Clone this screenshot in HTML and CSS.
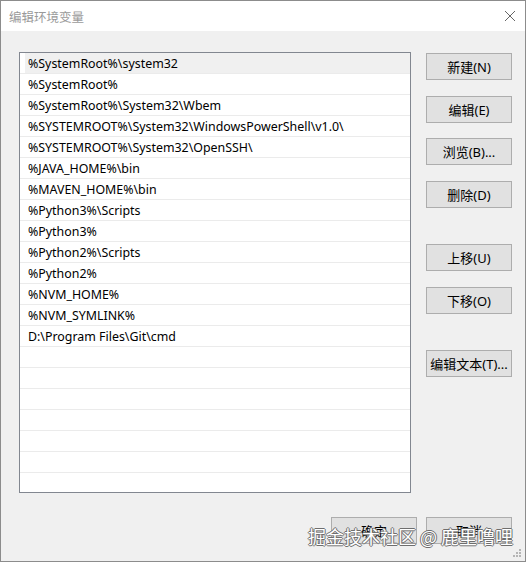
FILE: index.html
```html
<!DOCTYPE html>
<html lang="zh-CN">
<head>
    <meta charset="UTF-8">
    <title>编辑环境变量</title>
    <link rel="stylesheet" href="styles.css">
</head>
<body>

    <div class="window">
        <div class="titlebar">
            <span class="title">编辑环境变量</span>
            <svg class="close" width="12" height="12" viewBox="0 0 12 12">
                <path d="M1 1 L11 11 M11 1 L1 11" stroke="#666" stroke-width="1" fill="none"/>
            </svg>
        </div>

        <div class="content">
            <div class="main">
                <div class="list">
                    <div class="row selected">%SystemRoot%\system32</div>
                    <div class="row">%SystemRoot%</div>
                    <div class="row">%SystemRoot%\System32\Wbem</div>
                    <div class="row">%SYSTEMROOT%\System32\WindowsPowerShell\v1.0\</div>
                    <div class="row">%SYSTEMROOT%\System32\OpenSSH\</div>
                    <div class="row">%JAVA_HOME%\bin</div>
                    <div class="row">%MAVEN_HOME%\bin</div>
                    <div class="row">%Python3%\Scripts</div>
                    <div class="row">%Python3%</div>
                    <div class="row">%Python2%\Scripts</div>
                    <div class="row">%Python2%</div>
                    <div class="row">%NVM_HOME%</div>
                    <div class="row">%NVM_SYMLINK%</div>
                    <div class="row">D:\Program Files\Git\cmd</div>
                    <div class="row"></div>
                    <div class="row"></div>
                    <div class="row"></div>
                    <div class="row"></div>
                    <div class="row"></div>
                    <div class="row"></div>
                </div>

                <div class="side">
                    <button class="btn">新建(N)</button>
                    <button class="btn">编辑(E)</button>
                    <button class="btn">浏览(B)...</button>
                    <button class="btn">删除(D)</button>
                    <button class="btn group">上移(U)</button>
                    <button class="btn">下移(O)</button>
                    <button class="btn group">编辑文本(T)...</button>
                </div>
            </div>

            <div class="footer">
                <button class="btn">确定</button>
                <button class="btn">取消</button>
            </div>

            <svg class="grip" width="9" height="9" viewBox="0 0 9 9">
                <g fill="#b5b5b5">
                    <rect x="6" y="0" width="2" height="2"/>
                    <rect x="3" y="3" width="2" height="2"/>
                    <rect x="6" y="3" width="2" height="2"/>
                    <rect x="0" y="6" width="2" height="2"/>
                    <rect x="3" y="6" width="2" height="2"/>
                    <rect x="6" y="6" width="2" height="2"/>
                </g>
            </svg>
        </div>

        <div class="watermark">掘金技术社区 @ 鹿里噜哩</div>
    </div>

</body>
</html>
```

FILE: styles.css
```css
body { margin: 0; background: #fff; font-family: "Noto Sans", "Noto Sans CJK SC", sans-serif; }
.window {
    position: relative; width: 524px; height: 560px; border: 1px solid #8c8c8c;
    display: flex; flex-direction: column;
}
.titlebar { height: 30px; background: #fff; display: flex; align-items: center; justify-content: space-between; padding: 0 9px 0 8px; }
.title { font-size: 12.5px; color: #9a9a9a; font-family: "Noto Sans CJK SC", sans-serif; }
.close { margin-top: -1px; }

.content { position: relative; flex: 1; background: #f0f0f0; padding: 21px 13px 0 18px; }
.main { display: flex; }
.list { width: 390px; height: 439px; border: 1px solid #828790; background: #fff; overflow: hidden; }
.row {
    height: 20px; line-height: 21px; border-bottom: 1px solid #ebebeb;
    padding-left: 8px; font-size: 12.4px; color: #000; white-space: nowrap;
}
.row.selected { background: #f0f0f0; box-shadow: inset 5px 0 0 #fff; }

.side { display: flex; flex-direction: column; margin-left: 15px; padding-top: 1px; }
.btn {
    width: 86px; height: 27px; margin-bottom: 15.5px; padding: 0;
    background: #e1e1e1; border: 1px solid #adadad; border-radius: 0;
    font-family: "Noto Sans", "Noto Sans CJK SC", sans-serif; font-size: 13px; color: #000;
}
.btn.group { margin-top: 21px; }

.footer { display: flex; justify-content: flex-end; gap: 9px; margin-top: 24px; }
.footer .btn { margin: 0; }

.grip { position: absolute; right: 3px; bottom: 3px; }

.watermark {
    position: absolute; left: 307px; top: 522px; white-space: nowrap;
    font-family: "Noto Sans CJK SC", sans-serif; font-size: 18px; color: #fff;
    text-shadow: 1px 0 0 #6e6e6e, -1px 0 0 #6e6e6e, 0 1px 0 #6e6e6e, 0 -1px 0 #6e6e6e;
}
```
